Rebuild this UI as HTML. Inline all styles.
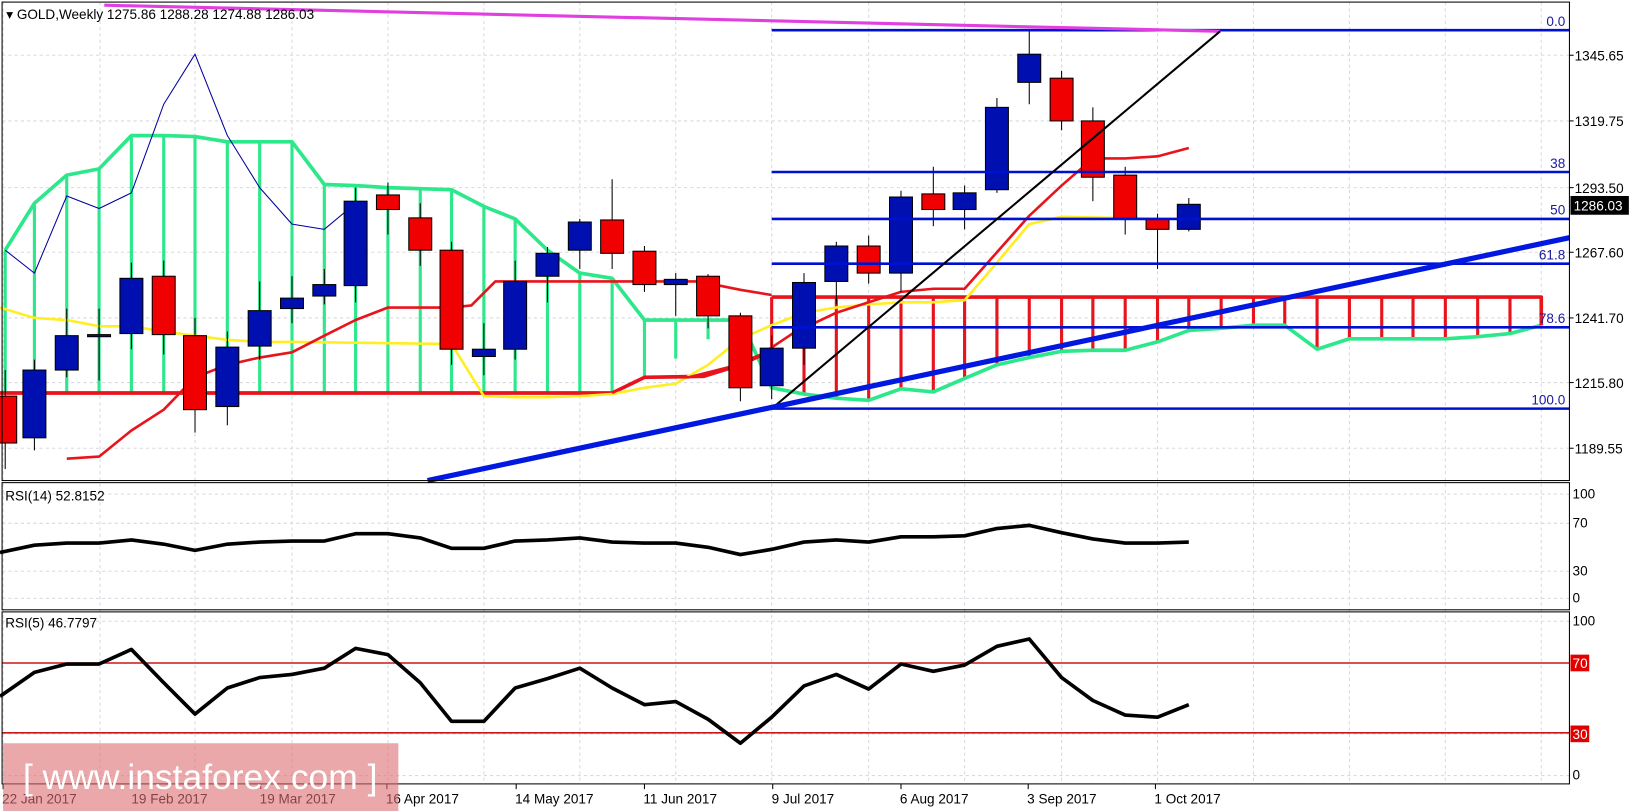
<!DOCTYPE html>
<html><head><meta charset="utf-8"><style>
html,body{margin:0;padding:0;background:#fff;overflow:hidden}
svg{display:block}
text{font-family:"Liberation Sans",sans-serif}
</style></head><body>
<svg id="s" width="1632" height="811" viewBox="0 0 1565 778" preserveAspectRatio="none" xmlns="http://www.w3.org/2000/svg">
<rect width="1565" height="778" fill="#fff"/>
<g id="grid" stroke="#d8d8e0" stroke-dasharray="3,3" stroke-width="1"></g>
<g id="cloud"></g>
<g id="lines" fill="none" stroke-linejoin="round"></g>
<g id="candles"></g>
<g id="over" fill="none"></g>
<g id="txt" font-size="13" fill="#000"></g>
</svg>
<script>
const NS="http://www.w3.org/2000/svg";
function el(p,t,a,txt){const e=document.createElementNS(NS,t);for(const k in a)e.setAttribute(k,a[k]);if(txt!==undefined)e.textContent=txt;document.getElementById(p).appendChild(e);return e;}
function pl(p,pts,col,w){el(p,'polyline',{points:pts.map(q=>q.join(',')).join(' '),stroke:col,'stroke-width':w,fill:'none','stroke-linejoin':'round'});}
// grid
const gx=[3,96,187,280,372,464,556,648,740,833,925,1018,1110,1202,1294,1386,1478];
gx.forEach(x=>{el('grid','line',{x1:x,y1:2,x2:x,y2:752});});
[53,116,180,242,305,367,430,474,502,548,574,596,636,704,744].forEach(y=>el('grid','line',{x1:2,y1:y,x2:1505,y2:y}));
// cloud
const xs=[5];for(let i=1;i<=48;i++)xs.push(Math.round(5+i*30.75));
const A=[[5,240],[33,195],[64,168],[95,162],[126,130],[157,130],[187,131],[218,136],[249,136],[280,136],[311,177],[341,178],[372,180],[403,181],[433,182],[464,198],[494,210],[525,240],[556,262],[587,267],[618,307],[648,307],[679,307],[710,307],[740,372],[771,378],[802,382],[833,384],[864,373],[895,376],[925,363],[956,350],[987,343],[1018,337],[1048,336],[1079,336],[1110,328],[1140,317],[1171,315],[1202,312],[1232,312],[1263,335],[1294,325],[1325,325],[1355,325],[1386,325],[1417,323],[1448,320],[1478,312]];
function bY(x){if(x<=587)return 377;if(x<=618)return 362;if(x<=740)return 362-(x-618)*0.6;return 285;}
A.forEach(([x,y])=>{const b=bY(x);const c=y<b?'#2de88a':'#e8141c';if(x<=740&&y<b)el('cloud','line',{x1:x,y1:y,x2:x,y2:b,stroke:c,'stroke-width':3});else if(x>=740)el('cloud','line',{x1:x,y1:285,x2:x,y2:y,stroke:'#e8141c','stroke-width':3});});
pl('cloud',A,'#2de88a',3.5);
pl('cloud',[[0,377],[587,377],[618,362],[675,361],[710,350],[740,336]],'#e8141c',3.5);
pl('cloud',[[740,285],[1478,285],[1478,312]],'#e8141c',3.5);
// lines
pl('lines',[[0,295],[33,305],[64,307],[95,313],[126,313],[157,318],[187,322],[218,326],[249,328],[280,328],[433,330],[464,380],[494,381],[525,381],[556,380],[587,378],[618,372],[648,368],[679,350],[710,325],[740,312],[771,300],[802,295],[833,292],[864,290],[895,290],[925,288],[956,252],[987,215],[1018,208],[1110,210]],'#ffee22',2.5);
pl('lines',[[64,440],[95,438],[126,413],[157,393],[187,362],[218,350],[249,343],[280,338],[311,322],[341,307],[372,295],[433,295],[452,293],[475,270],[670,270],[710,278],[740,283]],'#e8141c',2.5);
pl('lines',[[587,377],[618,362],[660,362],[700,352],[730,340],[760,320],[802,300],[833,290],[864,280],[895,277],[925,277],[956,242],[987,207],[1018,178],[1048,152],[1079,152],[1110,150],[1140,142]],'#e8141c',2.5);
pl('lines',[[5,240],[33,262],[64,188],[95,200],[126,185],[157,100],[187,52],[218,130],[249,180],[280,215],[311,220],[341,195]],'#0000a0',1);
// candles
const C=[[5,'r',380,425,355,450],[33,'b',355,420,345,432],[64,'b',322,355,296,362],[95,'b',321,323,296,365],[126,'b',267,320,252,335],[157,'r',265,321,250,340],[187,'r',322,393,305,415],[218,'b',333,390,318,408],[249,'b',298,332,270,345],[280,'b',286,296,265,310],[311,'b',273,284,258,292],[341,'b',193,274,180,290],[372,'r',187,201,175,225],[403,'r',209,240,195,255],[433,'r',240,335,232,350],[464,'b',335,342,310,360],[494,'b',270,335,250,345],[525,'b',243,265,237,290],[556,'b',213,240,210,258],[587,'r',211,243,172,258],[618,'r',241,273,236,280],[648,'b',268,273,262,303],[679,'r',265,303,263,315],[710,'r',303,372,300,385],[740,'b',334,370,322,383],[771,'b',271,334,262,350],[802,'b',236,270,232,292],[833,'r',236,262,226,272],[864,'b',189,262,183,280],[895,'r',186,201,160,217],[925,'b',185,201,178,220],[956,'b',103,182,94,185],[987,'b',52,79,30,100],[1018,'r',75,116,68,125],[1048,'r',116,170,103,193],[1079,'r',168,210,160,225],[1110,'r',210,220,205,258],[1140,'b',196,220,190,222]];
C.forEach(([x,c,t,b,h,l])=>{el('candles','line',{x1:x,y1:h,x2:x,y2:l,stroke:'#000','stroke-width':1});el('candles','rect',{x:x-11,y:t,width:22,height:Math.max(b-t,2),fill:c=='r'?'#f00000':'#0010b0',stroke:'#000','stroke-width':1});});
// fib
[[29,'0.0'],[165,'38'],[210,'50'],[253,'61.8'],[314,'78.6'],[392,'100.0']].forEach(([y,t])=>{el('over','line',{x1:740,y1:y,x2:1505,y2:y,stroke:'#0010d0','stroke-width':2.5});el('txt','text',{x:1501,y:y-4,'text-anchor':'end',fill:'#1a1aa0','font-size':13},t);});
el('over','line',{x1:100,y1:5,x2:1170,y2:30,stroke:'#e040e0','stroke-width':3});
el('over','line',{x1:740,y1:392,x2:1170,y2:30,stroke:'#000','stroke-width':2});
el('over','line',{x1:410,y1:461,x2:1505,y2:228,stroke:'#0018e0','stroke-width':5});
// RSI panels
pl('over',[[0,530],[33,523],[64,521],[95,521],[126,518],[157,522],[187,528],[218,522],[249,520],[280,519],[311,519],[341,512],[372,512],[403,516],[433,526],[464,526],[494,519],[525,518],[556,516],[587,520],[618,521],[648,521],[679,525],[710,532],[740,527],[771,520],[802,518],[833,520],[864,515],[895,515],[925,514],[956,507],[987,504],[1018,511],[1048,517],[1079,521],[1110,521],[1140,520]],'#000',3.5);
el('over','line',{x1:2,y1:636,x2:1505,y2:636,stroke:'#c81818','stroke-width':1.5});
el('over','line',{x1:2,y1:703,x2:1505,y2:703,stroke:'#c81818','stroke-width':1.5});
pl('over',[[0,668],[33,645],[64,637],[95,637],[126,623],[157,655],[187,685],[218,660],[249,650],[280,647],[311,641],[341,622],[372,628],[403,655],[433,692],[464,692],[494,660],[525,651],[556,641],[587,660],[618,676],[648,673],[679,690],[710,713],[740,688],[771,658],[802,647],[833,661],[864,637],[895,644],[925,638],[956,620],[987,613],[1018,650],[1048,672],[1079,686],[1110,688],[1140,676]],'#000',3.5);
// frames
[[2,2,1503,459],[2,463,1503,122],[2,587,1503,165]].forEach(([x,y,w,h])=>el('over','rect',{x:x,y:y,width:w,height:h,stroke:'#000','stroke-width':1}));
[[1505,53],[1505,116],[1505,180],[1505,242],[1505,305],[1505,367],[1505,430]].forEach(([x,y])=>el('over','line',{x1:x,y1:y,x2:x+4,y2:y,stroke:'#000'}));
// price labels
[['1345.65',53],['1319.75',116],['1293.50',180],['1267.60',242],['1241.70',305],['1215.80',367],['1189.55',430]].forEach(([t,y])=>el('txt','text',{x:1510,y:y+5},t));
el('txt','rect',{x:1506,y:188,width:56,height:18,fill:'#000'});
el('txt','text',{x:1509,y:202,fill:'#fff'},'1286.03');
[['100',478],['70',506],['30',552],['0',578],['100',600],['0',748]].forEach(([t,y])=>el('txt','text',{x:1508,y:y},t));
el('txt','rect',{x:1506,y:628,width:18,height:16,fill:'#e00000'});el('txt','text',{x:1508,y:641,fill:'#fff'},'70');
el('txt','rect',{x:1506,y:696,width:18,height:16,fill:'#e00000'});el('txt','text',{x:1508,y:709,fill:'#fff'},'30');
el('txt','text',{x:5,y:480},'RSI(14) 52.8152');
el('txt','text',{x:5,y:602},'RSI(5) 46.7797');
el('txt','text',{x:6,y:18},'▾ GOLD,Weekly  1275.86 1288.28 1274.88 1286.03');
// dates
[['22 Jan 2017',2],['19 Feb 2017',126],['19 Mar 2017',249],['16 Apr 2017',370],['14 May 2017',494],['11 Jun 2017',617],['9 Jul 2017',740],['6 Aug 2017',863],['3 Sep 2017',985],['1 Oct 2017',1107]].forEach(([t,x])=>{el('txt','text',{x:x,y:771},t);el('txt','line',{x1:x+1,y1:752,x2:x+1,y2:757,stroke:'#000'});});
// watermark
el('txt','rect',{x:3,y:713,width:379,height:65,fill:'rgba(220,110,115,0.6)'});
el('txt','text',{x:22,y:757,fill:'#fff','font-size':34},'[  www.instaforex.com ]');
</script>
</body></html>
